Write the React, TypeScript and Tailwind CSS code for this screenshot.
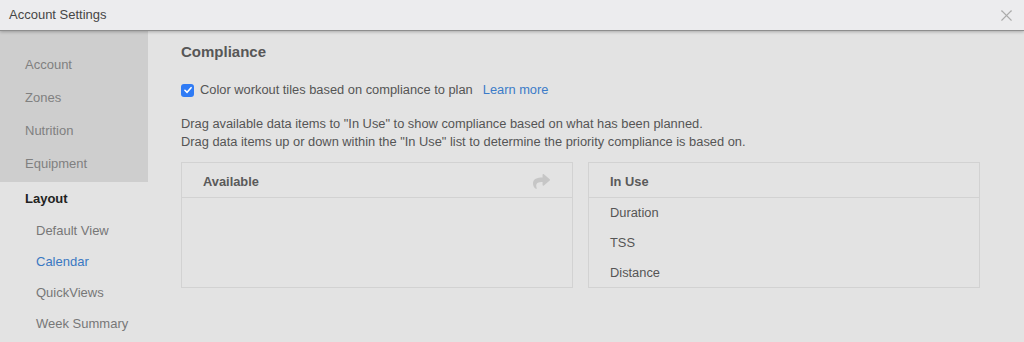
import { X } from "lucide-react";
import { FaShare } from "react-icons/fa";

const topItems = ["Account", "Zones", "Nutrition", "Equipment"];
const layoutItems = [
  { name: "Default View", active: false },
  { name: "Calendar", active: true },
  { name: "QuickViews", active: false },
  { name: "Week Summary", active: false },
];
const inUse = ["Duration", "TSS", "Distance"];

export default function App() {
  return (
    <div
      className="w-[1024px] h-[342px] overflow-hidden bg-[#e3e3e3] flex flex-col text-[13px]"
      style={{ fontFamily: '"Liberation Sans", Arial, sans-serif' }}
    >
      {/* title bar */}
      <div className="h-[31px] shrink-0 bg-[#ececee] border-b border-[#8e8e8e] shadow-[0_1px_3px_rgba(0,0,0,0.25)] flex items-center justify-between pl-[9px] pr-[8px] relative z-10">
        <span className="text-[#464646] text-[13px]">Account Settings</span>
        <X className="w-[19px] h-[19px] text-[#ababab]" strokeWidth={1.4} />
      </div>

      <div className="flex flex-1 min-h-0">
        {/* sidebar */}
        <aside className="w-[148px] shrink-0 flex flex-col">
          <div className="bg-[#cecece] pt-[17px] pb-[2px]">
            {topItems.map((item) => (
              <div key={item} className="h-[33px] flex items-center pl-[25px] text-[#808080]">
                {item}
              </div>
            ))}
          </div>
          <div className="h-[33px] flex items-center pl-[25px] font-bold text-[#222]">Layout</div>
          {layoutItems.map((item) => (
            <div
              key={item.name}
              className={`h-[31px] flex items-center pl-[36px] ${item.active ? "text-[#3a78c2]" : "text-[#777]"}`}
            >
              {item.name}
            </div>
          ))}
        </aside>

        {/* main */}
        <main className="flex-1 pl-[33px] pr-[44px] pt-[12px] text-[12.85px]">
          <h2 className="text-[15px] font-bold text-[#575757] leading-[18px]">Compliance</h2>

          <label className="mt-[21px] flex items-center h-[16px]">
            <span className="w-[13px] h-[13px] rounded-[3px] bg-[#2f7bf5] flex items-center justify-center">
              <svg viewBox="0 0 12 12" className="w-[10px] h-[10px]">
                <path d="M2.3 6.3 L4.9 8.8 L9.7 3.2" fill="none" stroke="white" strokeWidth="1.9" strokeLinecap="round" strokeLinejoin="round" />
              </svg>
            </span>
            <span className="ml-[6px] text-[#555]">Color workout tiles based on compliance to plan</span>
            <span className="ml-[10px] text-[#3b7bc8]">Learn more</span>
          </label>

          <div className="mt-[17px] text-[#555] leading-[18px]">
            <p>Drag available data items to "In Use" to show compliance based on what has been planned.</p>
            <p>Drag data items up or down within the "In Use" list to determine the priority compliance is based on.</p>
          </div>

          <div className="mt-[11px] grid grid-cols-2 gap-[15px]">
            <div className="border border-[#d2d2d2] h-[126px] flex flex-col">
              <div className="h-[35px] shrink-0 pt-[3px] border-b border-[#d2d2d2] flex items-center justify-between pl-[21px] pr-[22px]">
                <span className="font-bold text-[#5a5a5a]">Available</span>
                <FaShare className="w-[17px] h-[17px] text-[#c6c6c6]" />
              </div>
            </div>
            <div className="border border-[#d2d2d2] h-[126px] flex flex-col overflow-hidden">
              <div className="h-[35px] shrink-0 pt-[3px] border-b border-[#d2d2d2] flex items-center pl-[21px]">
                <span className="font-bold text-[#5a5a5a]">In Use</span>
              </div>
              {inUse.map((item) => (
                <div key={item} className="h-[30px] shrink-0 flex items-center pl-[21px] text-[#555]">
                  {item}
                </div>
              ))}
            </div>
          </div>
        </main>
      </div>
    </div>
  );
}
